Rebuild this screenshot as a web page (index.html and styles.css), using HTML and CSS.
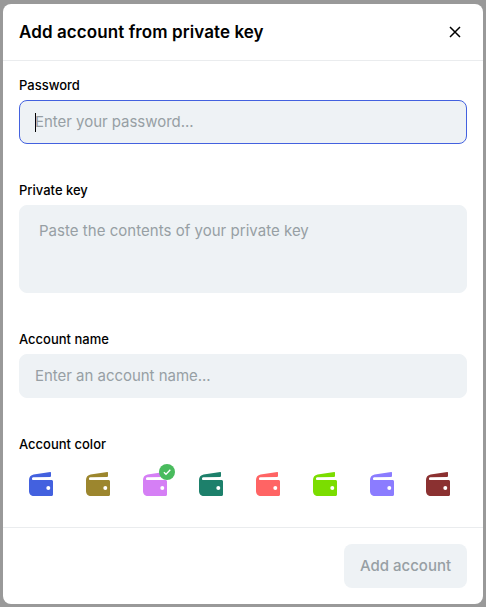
FILE: index.html
```html
<!DOCTYPE html>
<html lang="en">
<head>
<meta charset="utf-8">
<title>Add account from private key</title>
<link rel="stylesheet" href="styles.css">
</head>
<body>
<svg width="0" height="0" class="defs" aria-hidden="true">
  <symbol id="wallet" viewBox="0 0 24 24">
    <path fill="currentColor" fill-rule="evenodd" d="M21.3.1 4.6 2.500C1.800 3 0 5 0 8v11c0 3 2 5 5 5h17.500c.9 0 1.500-.6 1.500-1.500v-13C24 8.600 23.400 8 22.500 8H4.200C3.400 8 3 7.500 3 6.700s.4-1.300 1.200-1.400L20.700 5c.8 0 1.300-.5 1.300-1.300V.8c0-.5-.3-.8-.7-.7ZM19.300 14a2 2 0 1 1 0 4 2 2 0 0 1 0-4Z"/>
  </symbol>
</svg>
<main class="modal">
  <header class="modal-header">
    <h1 class="title">Add account from private key</h1>
    <button class="close" aria-label="Close"><svg width="12" height="12" viewBox="0 0 12 12"><path d="M1 1l10 10M11 1 1 11" fill="none" stroke="#000" stroke-width="1.5"/></svg></button>
  </header>
  <section class="modal-body">
    <div class="field password">
      <div class="label">Password</div>
      <div class="input focused"><span class="caret"></span>Enter your password...</div>
    </div>
    <div class="field key">
      <div class="label">Private key</div>
      <div class="input textarea">Paste the contents of your private key</div>
    </div>
    <div class="field name">
      <div class="label">Account name</div>
      <div class="input">Enter an account name...</div>
    </div>
    <div class="field">
      <div class="label">Account color</div>
      <div class="colors">
        <div class="swatch blue"><svg><use href="#wallet"/></svg></div>
        <div class="swatch gold"><svg><use href="#wallet"/></svg></div>
        <div class="swatch pink"><svg><use href="#wallet"/></svg>
          <span class="badge"><svg viewBox="0 0 16 16"><path d="m4.900 8.200 2.100 2.100 4.300-4.500" fill="none" stroke="#fff" stroke-width="1.300"/></svg></span>
        </div>
        <div class="swatch teal"><svg><use href="#wallet"/></svg></div>
        <div class="swatch coral"><svg><use href="#wallet"/></svg></div>
        <div class="swatch lime"><svg><use href="#wallet"/></svg></div>
        <div class="swatch violet"><svg><use href="#wallet"/></svg></div>
        <div class="swatch maroon"><svg><use href="#wallet"/></svg></div>
      </div>
    </div>
  </section>
  <footer class="modal-footer"><button class="submit">Add account</button></footer>
</main>
</body>
</html>
```
FILE: styles.css
```css
* { box-sizing: border-box; }
body {
  margin: 0;
  height: 607px;
  padding: 4px 3px 3px;
  background: #999;
  font-family: Inter, sans-serif;
  color: #000;
  overflow: hidden;
}
.defs { display: none; }
.modal {
  display: flex;
  flex-direction: column;
  height: 600px;
  background: #fff;
  border-radius: 8px;
}
.modal-header {
  display: flex;
  align-items: center;
  justify-content: space-between;
  height: 57px;
  padding: 0 22.500px 0 16px;
  border-bottom: 1px solid #eaecee;
}
.title { margin: 0; font-size: 17px; font-weight: 600; line-height: 24px; letter-spacing: 0.085px; }
.close { padding: 0; border: 0; background: none; line-height: 0; }
.modal-body { flex: 1; padding: 16px 16px 0; }
.field.password { height: 105px; }
.field.key { height: 149px; }
.field.name { height: 105px; }
.label { height: 23px; font-size: 13px; font-weight: 500; line-height: 16px; }
.input {
  display: flex;
  align-items: center;
  height: 44px;
  padding: 0 15px;
  border: 1px solid #eef2f5;
  border-radius: 8px;
  background: #eef2f5;
  color: #979fa4;
  font-size: 15px;
  line-height: 20px;
  letter-spacing: -0.03px;
}
.input.focused { border-color: #4361df; }
.caret { width: 1px; height: 19px; margin-right: -1px; background: #000; }
.input.textarea { height: 88px; padding: 15px 19px; align-items: flex-start; letter-spacing: 0.03px; }
.colors {
  display: grid;
  grid-template-columns: repeat(8, 24px);
  column-gap: 32.75px;
  padding: 13px 0 0 10px;
}
.swatch { position: relative; height: 24px; }
.swatch > svg { display: block; width: 24px; height: 24px; }
.badge {
  position: absolute;
  top: -8px;
  left: 16px;
  width: 16px;
  height: 16px;
  border-radius: 50%;
  background: #49bb5d;
}
.badge svg { display: block; width: 16px; height: 16px; }
.blue { color: #4361df; }
.gold { color: #9c862e; }
.pink { color: #d57ff5; }
.teal { color: #1d806b; }
.coral { color: #ff6464; }
.lime { color: #7bdd00; }
.violet { color: #8b7cff; }
.maroon { color: #8b3131; }
.modal-footer {
  display: flex;
  justify-content: flex-end;
  height: 77px;
  padding: 16px;
  border-top: 1px solid #eaecee;
}
.submit {
  width: 123px;
  height: 44px;
  padding: 0;
  border: 0;
  border-radius: 8px;
  background: #eef2f5;
  color: #979fa4;
  font: 500 15px/20px Inter, sans-serif;
}
```
